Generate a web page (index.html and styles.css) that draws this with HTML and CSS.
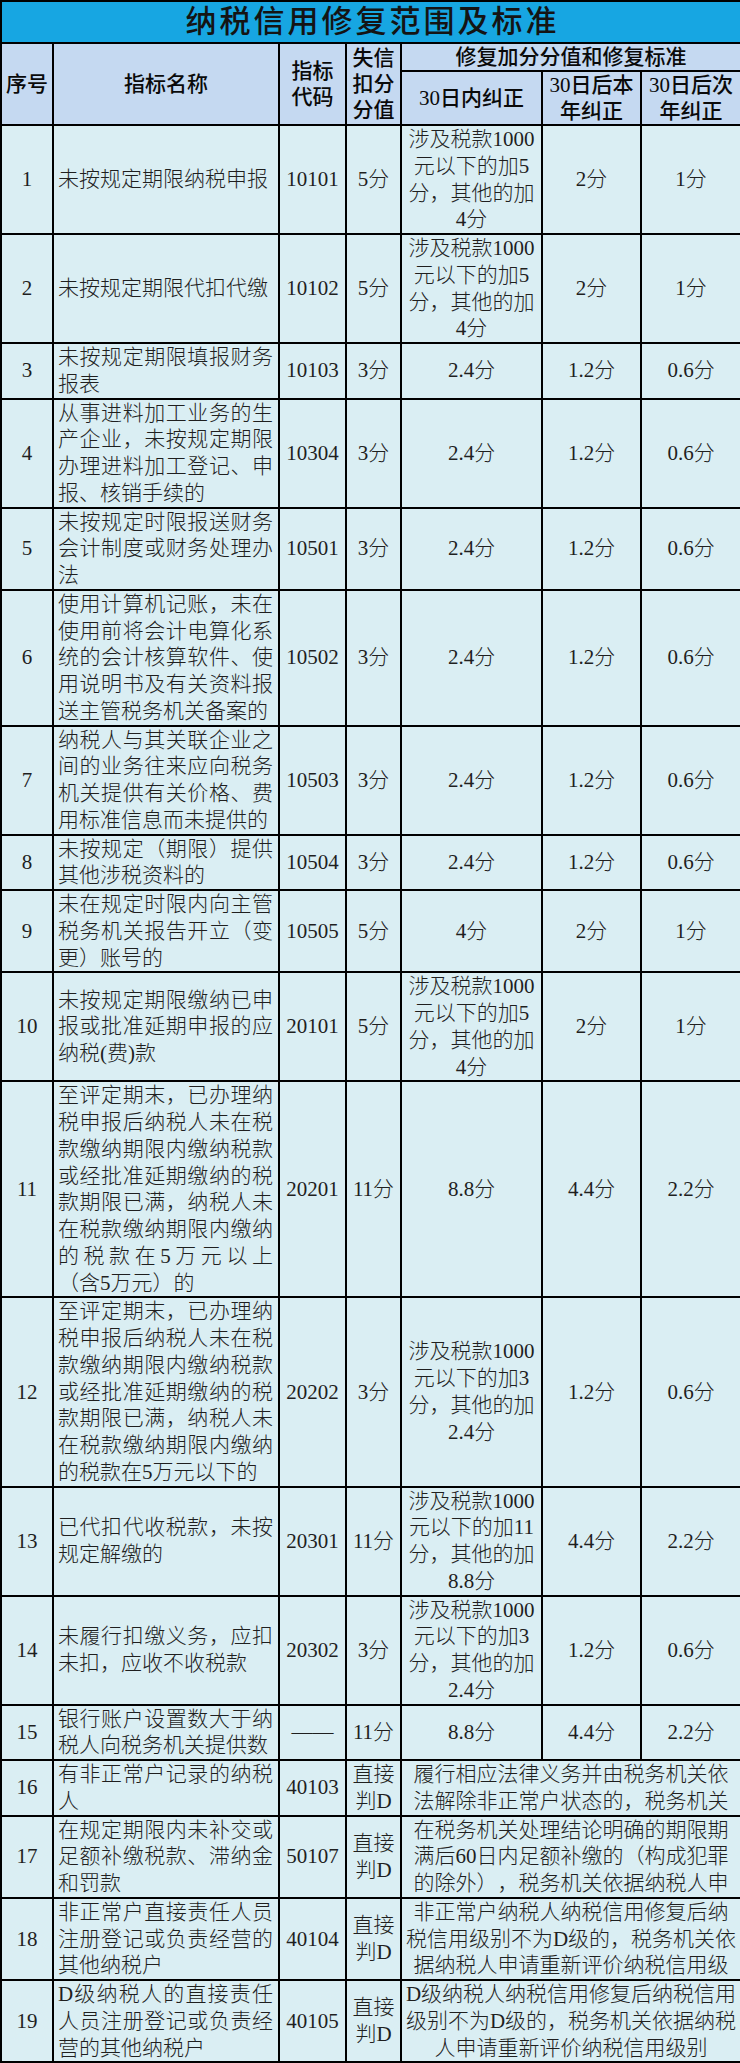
FILE: index.html
```html
<!DOCTYPE html>
<html lang="zh-CN">
<head>
<meta charset="utf-8">
<title>纳税信用修复范围及标准</title>
<link rel="stylesheet" href="styles.css">
</head>
<body>
<table class="sheet">
  <colgroup>
    <col class="c-no">
    <col class="c-name">
    <col class="c-code">
    <col class="c-ded">
    <col class="c-fix">
    <col class="c-late">
    <col class="c-next">
  </colgroup>
  <thead>
    <tr><th colspan="7" class="title">纳税信用修复范围及标准</th></tr>
    <tr class="hd">
      <th rowspan="2">序号</th>
      <th rowspan="2">指标名称</th>
      <th rowspan="2">指标<br>代码</th>
      <th rowspan="2">失信<br>扣分<br>分值</th>
      <th colspan="3">修复加分分值和修复标准</th>
    </tr>
    <tr class="hd">
      <th>30日内纠正</th>
      <th>30日后本<br>年纠正</th>
      <th>30日后次<br>年纠正</th>
    </tr>
  </thead>
  <tbody>
    <tr><td>1</td><td class="name">未按规定期限纳税申报</td><td>10101</td><td>5分</td><td class="fix">涉及税款1000元以下的加5分，其他的加4分</td><td>2分</td><td>1分</td></tr>
    <tr><td>2</td><td class="name">未按规定期限代扣代缴</td><td>10102</td><td>5分</td><td class="fix">涉及税款1000元以下的加5分，其他的加4分</td><td>2分</td><td>1分</td></tr>
    <tr><td>3</td><td class="name">未按规定期限填报财务报表</td><td>10103</td><td>3分</td><td class="fix">2.4分</td><td>1.2分</td><td>0.6分</td></tr>
    <tr><td>4</td><td class="name">从事进料加工业务的生产企业，未按规定期限办理进料加工登记、申报、核销手续的</td><td>10304</td><td>3分</td><td class="fix">2.4分</td><td>1.2分</td><td>0.6分</td></tr>
    <tr><td>5</td><td class="name">未按规定时限报送财务会计制度或财务处理办法</td><td>10501</td><td>3分</td><td class="fix">2.4分</td><td>1.2分</td><td>0.6分</td></tr>
    <tr><td>6</td><td class="name">使用计算机记账，未在使用前将会计电算化系统的会计核算软件、使用说明书及有关资料报送主管税务机关备案的</td><td>10502</td><td>3分</td><td class="fix">2.4分</td><td>1.2分</td><td>0.6分</td></tr>
    <tr><td>7</td><td class="name">纳税人与其关联企业之间的业务往来应向税务机关提供有关价格、费用标准信息而未提供的</td><td>10503</td><td>3分</td><td class="fix">2.4分</td><td>1.2分</td><td>0.6分</td></tr>
    <tr><td>8</td><td class="name">未按规定（期限）提供其他涉税资料的</td><td>10504</td><td>3分</td><td class="fix">2.4分</td><td>1.2分</td><td>0.6分</td></tr>
    <tr><td>9</td><td class="name">未在规定时限内向主管税务机关报告开立（变更）账号的</td><td>10505</td><td>5分</td><td class="fix">4分</td><td>2分</td><td>1分</td></tr>
    <tr><td>10</td><td class="name">未按规定期限缴纳已申报或批准延期申报的应纳税(费)款</td><td>20101</td><td>5分</td><td class="fix">涉及税款1000元以下的加5分，其他的加4分</td><td>2分</td><td>1分</td></tr>
    <tr><td>11</td><td class="name">至评定期末，已办理纳税申报后纳税人未在税款缴纳期限内缴纳税款或经批准延期缴纳的税款期限已满，纳税人未在税款缴纳期限内缴纳的税款在5万元以上（含5万元）的</td><td>20201</td><td>11分</td><td class="fix">8.8分</td><td>4.4分</td><td>2.2分</td></tr>
    <tr><td>12</td><td class="name">至评定期末，已办理纳税申报后纳税人未在税款缴纳期限内缴纳税款或经批准延期缴纳的税款期限已满，纳税人未在税款缴纳期限内缴纳的税款在5万元以下的</td><td>20202</td><td>3分</td><td class="fix">涉及税款1000元以下的加3分，其他的加2.4分</td><td>1.2分</td><td>0.6分</td></tr>
    <tr><td>13</td><td class="name">已代扣代收税款，未按规定解缴的</td><td>20301</td><td>11分</td><td class="fix">涉及税款1000元以下的加11分，其他的加8.8分</td><td>4.4分</td><td>2.2分</td></tr>
    <tr><td>14</td><td class="name">未履行扣缴义务，应扣未扣，应收不收税款</td><td>20302</td><td>3分</td><td class="fix">涉及税款1000元以下的加3分，其他的加2.4分</td><td>1.2分</td><td>0.6分</td></tr>
    <tr><td>15</td><td class="name">银行账户设置数大于纳税人向税务机关提供数</td><td>——</td><td>11分</td><td class="fix">8.8分</td><td>4.4分</td><td>2.2分</td></tr>
    <tr class="late"><td>16</td><td class="name">有非正常户记录的纳税人</td><td>40103</td><td>直接判D</td><td colspan="3" class="merge">履行相应法律义务并由税务机关依法解除非正常户状态的，税务机关</td></tr>
    <tr class="late"><td>17</td><td class="name">在规定期限内未补交或足额补缴税款、滞纳金和罚款</td><td>50107</td><td>直接判D</td><td colspan="3" class="merge">在税务机关处理结论明确的期限期满后60日内足额补缴的（构成犯罪的除外），税务机关依据纳税人申</td></tr>
    <tr class="late"><td>18</td><td class="name">非正常户直接责任人员注册登记或负责经营的其他纳税户</td><td>40104</td><td>直接判D</td><td colspan="3" class="merge">非正常户纳税人纳税信用修复后纳税信用级别不为D级的，税务机关依据纳税人申请重新评价纳税信用级</td></tr>
    <tr class="late"><td>19</td><td class="name">D级纳税人的直接责任人员注册登记或负责经营的其他纳税户</td><td>40105</td><td>直接判D</td><td colspan="3" class="merge">D级纳税人纳税信用修复后纳税信用级别不为D级的，税务机关依据纳税人申请重新评价纳税信用级别</td></tr>
  </tbody>
</table>
</body>
</html>
```

FILE: styles.css
```css
html, body {
  margin: 0;
  padding: 0;
  background: #ffffff;
}

body {
  font-family: "Liberation Serif", "Noto Sans CJK SC", serif;
  color: #1f1f1f;
}

.sheet {
  border-collapse: collapse;
  table-layout: fixed;
  width: 740px;
}

.c-no { width: 52px; }
.c-name { width: 226px; }
.c-code { width: 67px; }
.c-ded { width: 55px; }
.c-fix { width: 141px; }
.c-late { width: 99px; }
.c-next { width: 100px; }

.sheet th,
.sheet td {
  border: 2px solid #000;
  padding: 0 2px;
  text-align: center;
  vertical-align: middle;
  font-size: 21px;
  line-height: 26.75px;
  text-spacing-trim: space-all;
  overflow: hidden;
}

.sheet td {
  background: #daeef3;
  font-weight: 300;
}

.sheet .title {
  background: #17a6e2;
  color: #141414;
  font-size: 31px;
  font-weight: 500;
  letter-spacing: 3px;
  padding-left: 5px;
  line-height: 40px;
}

.hd th {
  background: #c5d9f1;
  color: #0a0a0a;
  font-weight: 500;
  line-height: 26px;
}

.sheet .name {
  text-align: justify;
  padding: 0 5px 0 4px;
}

.sheet .fix {
  padding: 0 4px;
}

.sheet .merge {
  padding: 0 2px;
}
```
